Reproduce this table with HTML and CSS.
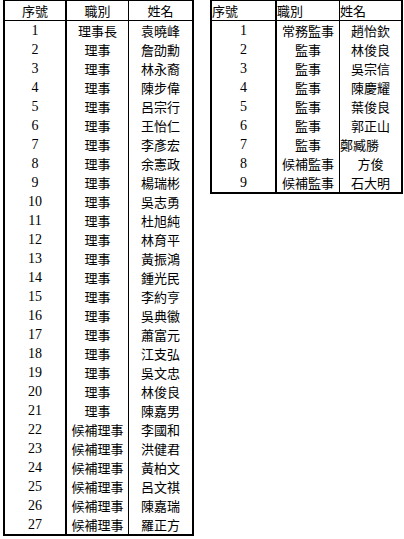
FILE: index.html
```html
<!DOCTYPE html>
<html lang="zh-Hant">
<head>
<meta charset="utf-8">
<title>理監事名單</title>
<link rel="stylesheet" href="styles.css">
</head>
<body>
<div class="page">
  <table class="roster roster-left">
    <colgroup><col class="c1"><col class="c2"><col class="c3"></colgroup>
    <thead>
      <tr><th>序號</th><th>職別</th><th>姓名</th></tr>
    </thead>
    <tbody>
      <tr><td class="num">1</td><td>理事長</td><td>袁曉峰</td></tr>
      <tr><td class="num">2</td><td>理事</td><td>詹劭勳</td></tr>
      <tr><td class="num">3</td><td>理事</td><td>林永裔</td></tr>
      <tr><td class="num">4</td><td>理事</td><td>陳步偉</td></tr>
      <tr><td class="num">5</td><td>理事</td><td>呂宗行</td></tr>
      <tr><td class="num">6</td><td>理事</td><td>王怡仁</td></tr>
      <tr><td class="num">7</td><td>理事</td><td>李彥宏</td></tr>
      <tr><td class="num">8</td><td>理事</td><td>余憲政</td></tr>
      <tr><td class="num">9</td><td>理事</td><td>楊瑞彬</td></tr>
      <tr><td class="num">10</td><td>理事</td><td>吳志勇</td></tr>
      <tr><td class="num">11</td><td>理事</td><td>杜旭純</td></tr>
      <tr><td class="num">12</td><td>理事</td><td>林育平</td></tr>
      <tr><td class="num">13</td><td>理事</td><td>黃振鴻</td></tr>
      <tr><td class="num">14</td><td>理事</td><td>鍾光民</td></tr>
      <tr><td class="num">15</td><td>理事</td><td>李約亨</td></tr>
      <tr><td class="num">16</td><td>理事</td><td>吳典徽</td></tr>
      <tr><td class="num">17</td><td>理事</td><td>蕭富元</td></tr>
      <tr><td class="num">18</td><td>理事</td><td>江支弘</td></tr>
      <tr><td class="num">19</td><td>理事</td><td>吳文忠</td></tr>
      <tr><td class="num">20</td><td>理事</td><td>林俊良</td></tr>
      <tr><td class="num">21</td><td>理事</td><td>陳嘉男</td></tr>
      <tr><td class="num">22</td><td>候補理事</td><td>李國和</td></tr>
      <tr><td class="num">23</td><td>候補理事</td><td>洪健君</td></tr>
      <tr><td class="num">24</td><td>候補理事</td><td>黃柏文</td></tr>
      <tr><td class="num">25</td><td>候補理事</td><td>呂文祺</td></tr>
      <tr><td class="num">26</td><td>候補理事</td><td>陳嘉瑞</td></tr>
      <tr><td class="num">27</td><td>候補理事</td><td>羅正方</td></tr>
    </tbody>
  </table>

  <table class="roster roster-right">
    <colgroup><col class="c1"><col class="c2"><col class="c3"></colgroup>
    <thead>
      <tr><th>序號</th><th>職別</th><th>姓名</th></tr>
    </thead>
    <tbody>
      <tr><td class="num">1</td><td>常務監事</td><td>趙怡欽</td></tr>
      <tr><td class="num">2</td><td>監事</td><td>林俊良</td></tr>
      <tr><td class="num">3</td><td>監事</td><td>吳宗信</td></tr>
      <tr><td class="num">4</td><td>監事</td><td>陳慶耀</td></tr>
      <tr><td class="num">5</td><td>監事</td><td>葉俊良</td></tr>
      <tr><td class="num">6</td><td>監事</td><td>郭正山</td></tr>
      <tr><td class="num">7</td><td>監事</td><td class="flush">鄭臧勝</td></tr>
      <tr><td class="num">8</td><td>候補監事</td><td>方俊</td></tr>
      <tr><td class="num">9</td><td>候補監事</td><td>石大明</td></tr>
    </tbody>
  </table>
</div>
</body>
</html>
```

FILE: styles.css
```css
html, body {
  margin: 0;
  padding: 0;
  background: #ffffff;
}

.page {
  display: flex;
  align-items: flex-start;
  gap: 16px;
  padding: 0 0 0 3px;
}

.roster {
  border-collapse: separate;
  border-spacing: 0;
  table-layout: fixed;
  border: 2px solid #000;
  border-top-width: 1px;
  font-family: "Noto Sans CJK TC", "Noto Sans", sans-serif;
  font-size: 13px;
  color: #000;
}

.roster-left { width: 191px; }
.roster-right { width: 193px; }

.roster-left .c1 { width: 62px; }
.roster-left .c2 { width: 62px; }
.roster-left .c3 { width: 63px; }

.roster-right .c1 { width: 65px; }
.roster-right .c2 { width: 63px; }
.roster-right .c3 { width: 61px; }

.roster th,
.roster td {
  padding: 0;
  height: 19px;
  line-height: 19px;
  text-align: center;
  white-space: nowrap;
  overflow: hidden;
  font-weight: normal;
}

.roster th {
  height: 19px;
  border-bottom: 1px solid #000;
}

.roster th:nth-child(1),
.roster td:nth-child(1) {
  border-right: 2px solid #000;
}

.roster th:nth-child(2),
.roster td:nth-child(2) {
  border-right: 1px solid #000;
}

.roster-right th {
  text-align: left;
}

.roster td.num {
  font-family: "Liberation Serif", "Times New Roman", serif;
  font-size: 14px;
}

.roster td.flush {
  text-align: left;
}
```
